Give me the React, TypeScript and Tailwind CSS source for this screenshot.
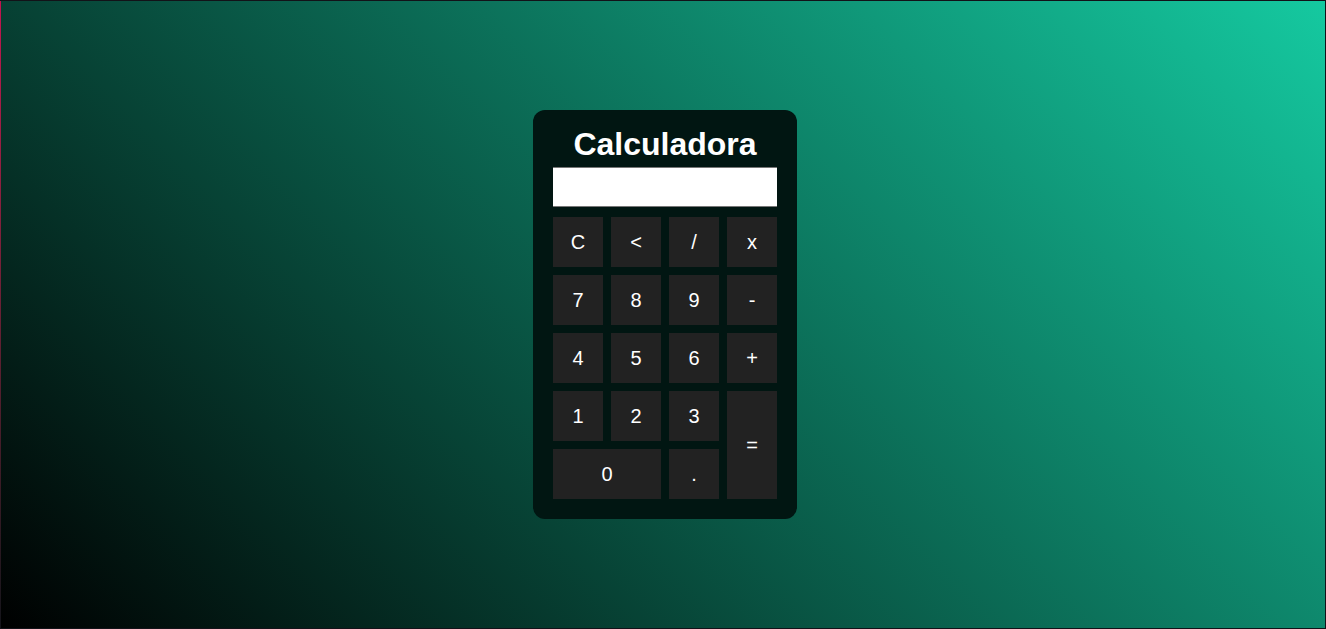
const rows: { label: string; cls: string }[] = [
  { label: 'C', cls: '' },
  { label: '<', cls: '' },
  { label: '/', cls: '' },
  { label: 'x', cls: '' },
  { label: '7', cls: '' },
  { label: '8', cls: '' },
  { label: '9', cls: '' },
  { label: '-', cls: '' },
  { label: '4', cls: '' },
  { label: '5', cls: '' },
  { label: '6', cls: '' },
  { label: '+', cls: '' },
  { label: '1', cls: '' },
  { label: '2', cls: '' },
  { label: '3', cls: '' },
  { label: '=', cls: 'row-span-2' },
  { label: '0', cls: 'col-span-2' },
  { label: '.', cls: '' },
]

function Key({ label, cls }: { label: string; cls: string }) {
  return (
    <button className={`bg-[#222222] text-white text-[20px] flex items-center justify-center ${cls}`}>
      {label}
    </button>
  )
}

export default function App() {
  return (
    <div
      className="flex h-[629px] w-[1326px] border-y border-r border-[#121218] overflow-hidden"
      style={{ fontFamily: '"Liberation Sans", Arial, sans-serif' }}
    >
      <div className="w-px shrink-0 bg-gradient-to-b from-[#c4124f] to-[#14141a]" />
      <div className="flex-1 flex justify-center items-start bg-[linear-gradient(45deg,#000000,#15c9a0)] pt-[109px] pl-[4px]">
        <div className="w-[264px] rounded-[12px] bg-[#011612] px-[20px] pt-[16px] pb-[20px]">
          <h1 className="text-white text-[32px] font-bold text-center leading-[37px] mb-[4px]">Calculadora</h1>
          <div className="h-[40px] bg-white border-y border-[#767676] mb-[10px]" />
          <div className="grid grid-cols-[repeat(4,50px)] auto-rows-[50px] gap-[8px]">
            {rows.map(k => (
              <Key key={k.label} label={k.label} cls={k.cls} />
            ))}
          </div>
        </div>
      </div>
    </div>
  )
}
